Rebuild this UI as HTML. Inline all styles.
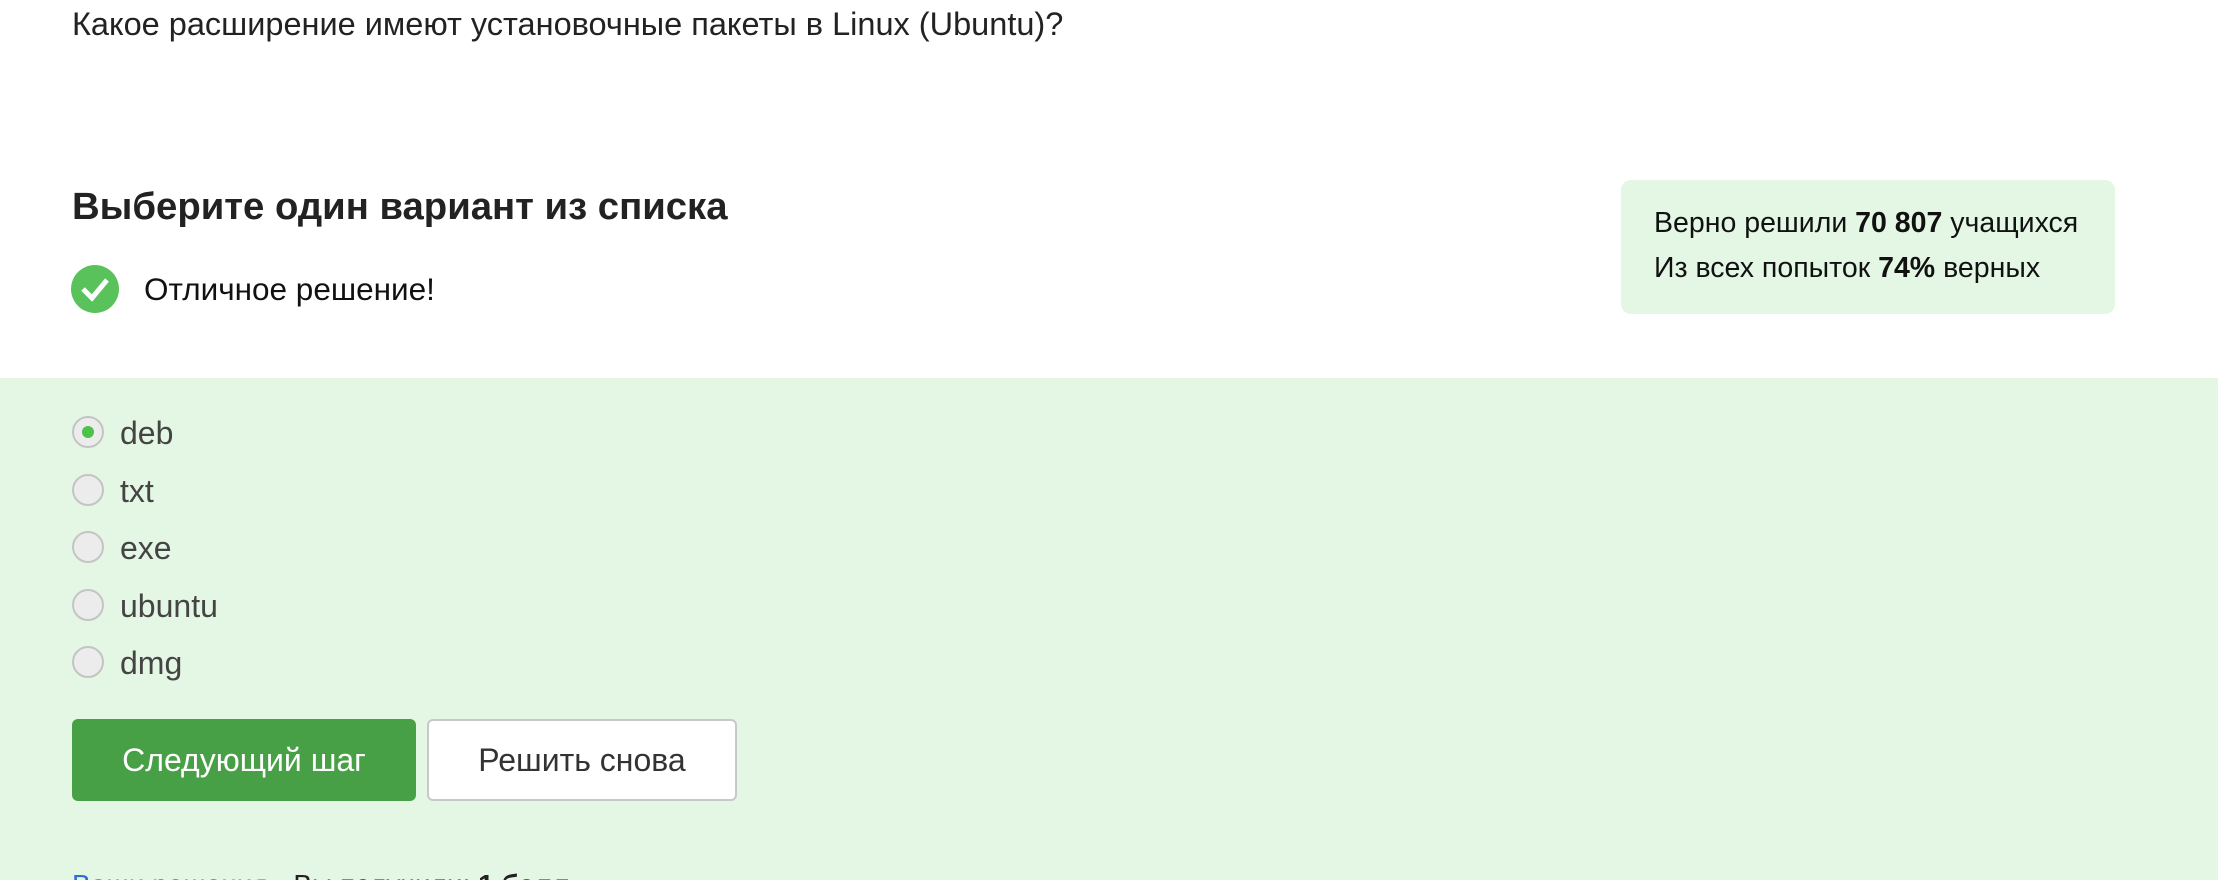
<!DOCTYPE html>
<html style="width:2218px;height:880px;overflow:hidden"><head><meta charset="utf-8"><style>
*{margin:0;padding:0;box-sizing:border-box}
body{width:2218px;height:880px;overflow:hidden;background:#fff;font-family:"Liberation Sans",Arial,sans-serif;color:#222;position:relative}
.abs{position:absolute;white-space:nowrap}
.band{position:absolute;left:0;top:378px;width:2218px;height:502px;background:#e4f6e4}
.radio{position:absolute;left:72px;width:32px;height:32px;border-radius:50%;border:2px solid #c4c4c4;background:#ececec}
.lbl{position:absolute;left:120px;font-size:32px;color:#444;line-height:36px}
.btn{position:absolute;top:719px;height:82px;border-radius:6px;font-size:32px;display:flex;align-items:center;justify-content:center}
</style></head><body>
<div class="abs" style="left:72px;top:2px;font-size:32.5px;line-height:44px">Какое расширение имеют установочные пакеты в Linux (Ubuntu)?</div>
<div class="abs" style="left:72px;top:184px;font-size:38.3px;font-weight:bold;line-height:46px">Выберите один вариант из списка</div>
<svg class="abs" style="left:71px;top:265px" width="48" height="48" viewBox="0 0 48 48"><circle cx="24" cy="24" r="24" fill="#59c25a"/><path d="M12 24 L21 33 L36 15" fill="none" stroke="#fff" stroke-width="5"/></svg>
<div class="abs" style="left:144px;top:271px;font-size:31.5px;line-height:36px;color:#111">Отличное решение!</div>
<div class="abs" style="left:1621px;top:180px;width:494px;height:134px;background:#e4f6e4;border-radius:10px"></div>
<div class="abs" style="left:1654px;top:207px;font-size:28.5px;line-height:32px;color:#111">Верно решили <b>70 807</b> учащихся</div>
<div class="abs" style="left:1654px;top:252px;font-size:28.5px;line-height:32px;color:#111">Из всех попыток <b>74%</b> верных</div>
<div class="band"></div>
<div class="radio" style="top:416px"><div style="position:absolute;left:8px;top:8px;width:12px;height:12px;border-radius:50%;background:#4cc24c"></div></div>
<div class="lbl" style="top:415px">deb</div>
<div class="radio" style="top:474px"></div><div class="lbl" style="top:473px">txt</div>
<div class="radio" style="top:531px"></div><div class="lbl" style="top:530px">exe</div>
<div class="radio" style="top:589px"></div><div class="lbl" style="top:588px">ubuntu</div>
<div class="radio" style="top:646px"></div><div class="lbl" style="top:645px">dmg</div>
<div class="btn" style="left:72px;width:344px;background:#48a046;color:#fff">Следующий шаг</div>
<div class="btn" style="left:427px;width:310px;background:#fff;border:2px solid #c8c8c8;color:#333">Решить снова</div>
<div style="position:absolute;left:0;top:860px;width:2218px;height:20px;overflow:hidden">
<div class="abs" style="left:72px;top:8px;font-size:28px;line-height:34px"><span style="color:#2e6fd8">Ваши решения</span> <span style="margin-left:18px">Вы получили: <b>1 балл</b></span></div>
</div>
</body></html>
